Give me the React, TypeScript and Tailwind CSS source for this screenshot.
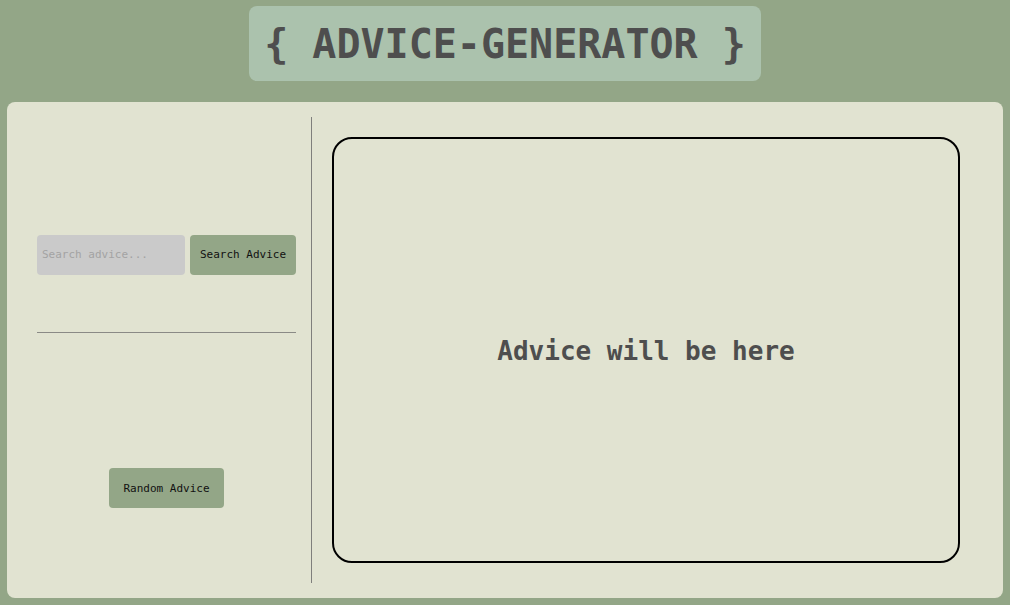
export default function App() {
  const mono = { fontFamily: '"DejaVu Sans Mono", "Liberation Mono", monospace' };
  return (
    <div className="min-h-[605px] w-full bg-[#93a687] pt-[6px] pb-[7px] px-[7px]" style={mono}>
      {/* Header */}
      <div className="flex justify-center">
        <h1 className="flex h-[75px] w-[512px] items-center justify-center rounded-lg bg-[#abc2ad] text-[40px] font-bold text-[#4e4e4e]">
          {"{ ADVICE-GENERATOR }"}
        </h1>
      </div>

      {/* Main panel */}
      <div className="mt-[21px] flex h-[496px] rounded-lg bg-[#e1e3d1] p-[15px]">
        {/* Left column */}
        <div className="flex w-[290px] flex-col border-r border-[#7f7f7c] px-[15px]">
          <div className="mt-[118px] flex gap-[5px]">
            <input
              type="text"
              placeholder="Search advice..."
              className="h-10 w-[148px] rounded bg-[#cacaca] px-[5px] pb-[2px] text-[11px] text-[#333] placeholder:text-[#a3a3a3] outline-none"
            />
            <button className="h-10 flex-1 rounded bg-[#93a687] text-[11px] text-[#111]">
              Search Advice
            </button>
          </div>
          <div className="mt-[57px] h-px bg-[#8a8a86]" />
          <div className="mt-[135px] flex justify-center">
            <button className="h-10 w-[115px] rounded bg-[#93a687] pt-[2px] text-[11px] text-[#111]">
              Random Advice
            </button>
          </div>
        </div>

        {/* Right column */}
        <div className="flex-1 py-5 pl-5">
          <div className="flex h-[426px] w-[628px] items-center justify-center rounded-[20px] border-2 border-black">
            <p className="mt-[3px] text-[26px] font-bold text-[#4e4e4e]">Advice will be here</p>
          </div>
        </div>
      </div>
    </div>
  );
}
